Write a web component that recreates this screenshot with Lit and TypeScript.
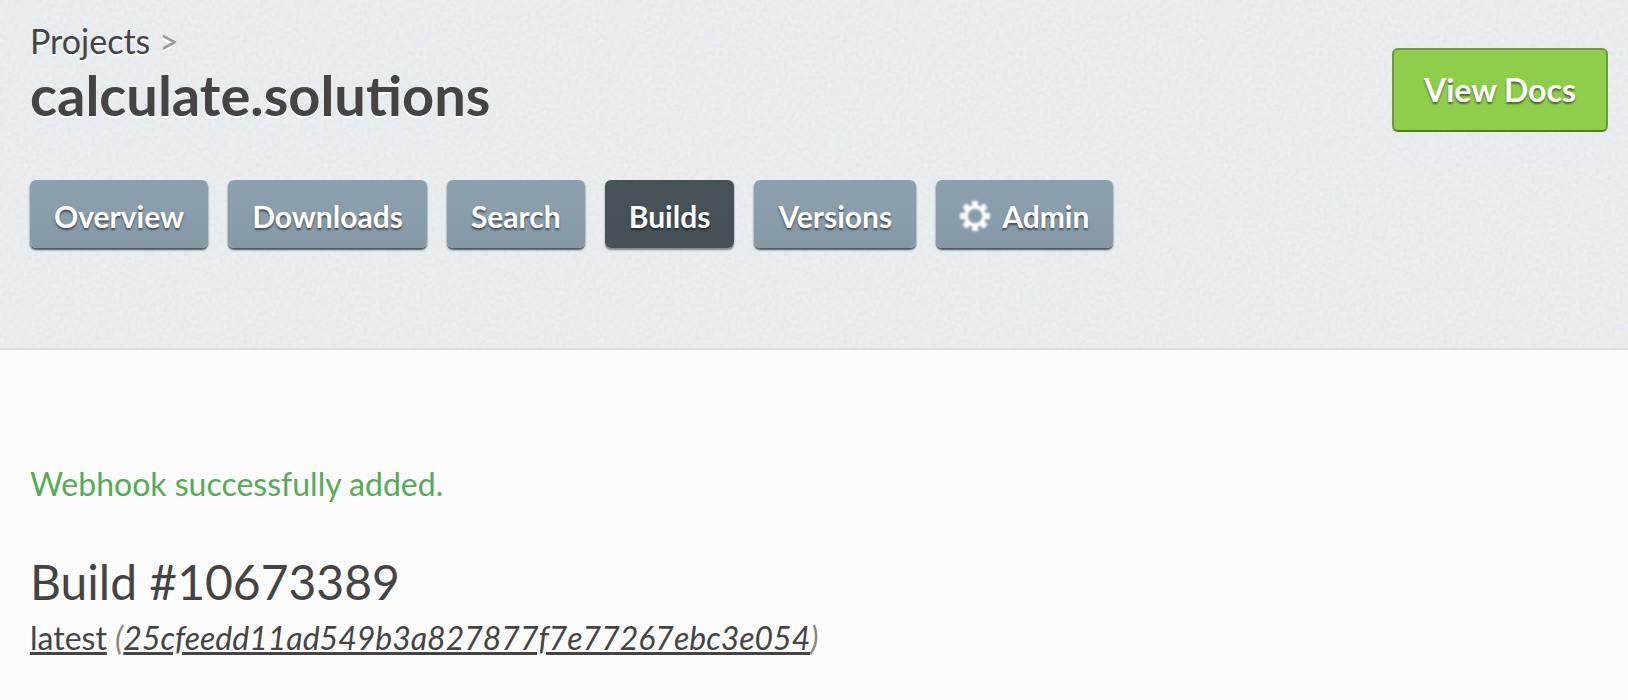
import { LitElement, html, css, svg, nothing } from "lit";
import { customElement, property, state } from "lit/decorators.js";
import { classMap } from "lit/directives/class-map.js";

interface Tab {
  label: string;
  icon?: boolean;
}

const TABS: Tab[] = [
  { label: "Overview" },
  { label: "Downloads" },
  { label: "Search" },
  { label: "Builds" },
  { label: "Versions" },
  { label: "Admin", icon: true },
];

const gear = svg`
  <g fill="currentColor">
    ${[0, 45, 90, 135, 180, 225, 270, 315].map(
      (a) => svg`<path d="M12 0h6v6h-6z" transform="rotate(${a} 15 15)"></path>`
    )}
  </g>
  <circle cx="15" cy="15" r="9" fill="none" stroke="currentColor" stroke-width="3.5"></circle>`;

@customElement("project-header")
export class ProjectHeader extends LitElement {
  @property() name = "";
  @state() private current = "Builds";

  static styles = css`
    :host {
      display: block;
      background-color: #eff3f6;
      background-image: url("data:image/svg+xml,%3Csvg xmlns='http://www.w3.org/2000/svg' width='300' height='300'%3E%3Cfilter id='n' x='0' y='0' width='100%25' height='100%25' color-interpolation-filters='sRGB'%3E%3CfeTurbulence type='fractalNoise' baseFrequency='.25' numOctaves='2' stitchTiles='stitch'/%3E%3CfeComponentTransfer%3E%3CfeFuncA type='linear' slope='0' intercept='.07'/%3E%3C/feComponentTransfer%3E%3C/filter%3E%3Crect width='300' height='300' filter='url(%23n)'/%3E%3C/svg%3E");
      border-bottom: 2px solid #d5dee6;
      padding: 21px 20px 100px 30px;
    }
    .top {
      display: flex;
      justify-content: space-between;
      align-items: flex-start;
      padding-bottom: 48px;
    }
    .heading {
      margin: 0;
      font-size: 56px;
      line-height: 68px;
      font-weight: 700;
      color: #444;
      text-shadow: 0 2px 0 #fff;
    }
    .crumb {
      display: block;
      font-size: 34px;
      line-height: 40px;
      font-weight: 400;
      color: #999;
    }
    .link {
      color: #444;
      text-decoration: none;
    }
    .docs {
      box-sizing: border-box;
      margin-top: 27px;
      padding: 20px 30px;
      border: 2px solid #6b9a37;
      border-bottom-color: #557b2d;
      border-radius: 6px;
      background: #8fce4b;
      color: #fff;
      font-size: 32px;
      line-height: 40px;
      font-weight: 700;
      text-decoration: none;
      text-shadow: 0 2px 2px rgba(0, 0, 0, 0.5);
    }
    .tabs {
      display: flex;
      flex-wrap: wrap;
      gap: 20px;
    }
    .tab {
      display: flex;
      align-items: center;
      gap: 12px;
      padding: 16px 24px 12px;
      border-radius: 6px;
      background: linear-gradient(#8ca1af, #8799a7);
      color: #fff;
      box-shadow: 0 2px 2px #465158;
      font-size: 30px;
      line-height: 40px;
      font-weight: 700;
      text-decoration: none;
      text-shadow: 0 2px 2px rgba(0, 0, 0, 0.5);
    }
    .active {
      background: linear-gradient(#475259, #465057);
      box-shadow: 0 2px 2px #7d868c;
    }
    .gear {
      width: 30px;
      height: 30px;
      filter: blur(1px);
    }
  `;

  render() {
    return html`
      <div class="top">
        <h1 class="heading">
          <span class="crumb"><a class="link" href="#projects">Projects</a> &gt;</span>
          <a class="link" href="#project">${this.name}</a>
        </h1>
        <a class="docs" href="#docs">View Docs</a>
      </div>
      <nav class="tabs" aria-label="Project">
        ${TABS.map(
          (t) => html`<a
            class=${classMap({ tab: true, active: t.label === this.current })}
            href="#${t.label.toLowerCase()}"
            @click=${() => (this.current = t.label)}
            >${t.icon
              ? html`<svg class="gear" viewBox="0 0 30 30" aria-hidden="true">${gear}</svg>`
              : nothing}${t.label}</a
          >`
        )}
      </nav>
    `;
  }
}

@customElement("app-root")
export class AppRoot extends LitElement {
  static styles = css`
    :host {
      display: block;
      min-height: 100vh;
      background: #fcfcfc;
      color: #444;
      font-family: Lato, "Liberation Sans", sans-serif;
    }
    .content {
      padding: 114px 30px 40px;
    }
    .notice {
      margin: 0;
      font-size: 32px;
      line-height: 40px;
      color: #55ab55;
    }
    .build {
      margin: 48px 0 0;
      font-size: 48px;
      line-height: 60px;
      font-weight: 400;
    }
    .version {
      margin: 6px 0 0;
      font-size: 32px;
      line-height: 40px;
      overflow-wrap: anywhere;
    }
    .version a {
      color: #444;
      text-decoration: underline;
    }
    .commit {
      font-style: italic;
      color: #8a8a75;
    }
  `;

  render() {
    return html`
      <project-header name="calculate.solutions"></project-header>
      <main class="content">
        <p class="notice" role="status">Webhook successfully added.</p>
        <h2 class="build">Build #10673389</h2>
        <p class="version">
          <a href="#latest">latest</a>
          <span class="commit">(<a href="#commit">25cfeedd11ad549b3a827877f7e77267ebc3e054</a>)</span>
        </p>
      </main>
    `;
  }
}
